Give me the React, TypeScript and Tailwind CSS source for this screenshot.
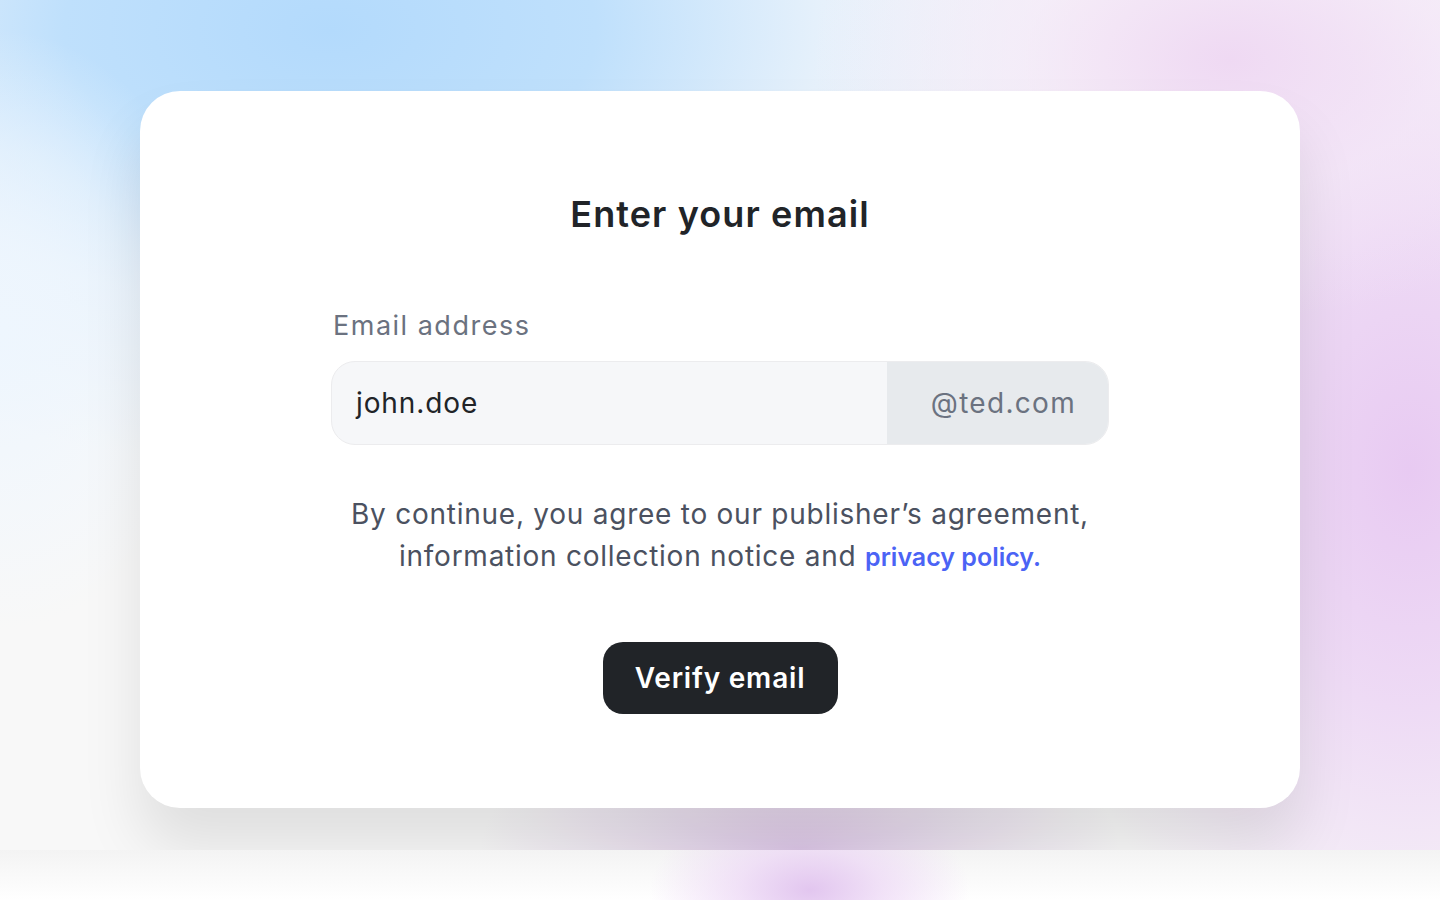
import React from "react";

export default function App() {
  return (
    <div className="w-full h-[900px] flex flex-col overflow-hidden bg-white" style={{ fontFamily: "Inter, 'Noto Sans', sans-serif" }}>
      <section className="relative h-[850px] w-full pt-[91px] px-[140px] bg-[#f8f8f8]">
        <div className="absolute inset-0 bg-[radial-gradient(ellipse_760px_440px_at_330px_30px,#b3dafc_0%,#bfe0fc_35%,rgba(218,236,253,0.6)_65%,rgba(248,248,248,0)_100%)]" />
        <div className="absolute inset-0 bg-[radial-gradient(ellipse_380px_560px_at_1410px_470px,#e8caf2_0%,rgba(235,210,244,0.8)_40%,rgba(248,248,248,0)_100%)]" />
        <div className="absolute inset-0 bg-[radial-gradient(ellipse_420px_260px_at_1230px_60px,#efd9f3_0%,rgba(244,230,248,0.6)_50%,rgba(248,248,248,0)_100%)]" />
        <div className="absolute inset-0 bg-[radial-gradient(ellipse_320px_140px_at_800px_850px,#dcc6e6_0%,rgba(225,210,232,0.6)_50%,rgba(248,248,248,0)_100%)]" />
        <div className="absolute inset-0 bg-[radial-gradient(ellipse_220px_300px_at_0px_330px,#eef6fe_0%,rgba(240,247,254,0.5)_60%,rgba(248,248,248,0)_100%)]" />
        <div className="relative h-[717px] rounded-[40px] bg-white shadow-[0_40px_60px_rgba(0,0,0,0.10)] flex flex-col items-center pt-[99px]">
          <h1 className="text-[36px] leading-[48px] font-semibold text-[#212428] tracking-[1.1px]">Enter your email</h1>
          <div className="w-[778px] mt-[70px]">
            <div className="text-[27px] leading-[36px] text-[#6b7280] pl-[2px] tracking-[1.5px]">Email address</div>
            <div className="mt-[17px] h-[84px] flex rounded-[24px] overflow-hidden border border-[#ececee] bg-[#f6f7f9]">
              <div className="flex-1 flex items-center pl-[24px] text-[28px] text-[#212428] tracking-[0.9px]">john.doe</div>
              <div className="w-[221px] flex items-center justify-end pr-[32px] bg-[#e7eaed] text-[28px] text-[#6b7280] tracking-[1.3px]">@ted.com</div>
            </div>
          </div>
          <p className="mt-[48px] text-center text-[28px] leading-[42px] text-[#4b5160] tracking-[0.75px]">
            By continue, you agree to our publisher’s agreement,
            <br />
            information collection notice and{" "}
            <span className="font-semibold text-[#4b63f5] text-[25px] tracking-[0px]">privacy policy.</span>
          </p>
          <button className="mt-[64px] h-[72px] w-[235px] rounded-[20px] bg-[#212428] text-white text-[28px] font-semibold tracking-[0.8px]">Verify email</button>
        </div>
      </section>
      <div className="relative h-[50px] w-full bg-white">
        <div className="absolute inset-0 bg-[linear-gradient(to_bottom,rgba(242,242,242,0.9),rgba(255,255,255,0))]" />
        <div className="absolute inset-0 bg-[radial-gradient(ellipse_160px_90px_at_810px_40px,#e2c6ef_0%,rgba(236,214,245,0.7)_45%,rgba(255,255,255,0)_100%)]" />
      </div>
    </div>
  );
}
